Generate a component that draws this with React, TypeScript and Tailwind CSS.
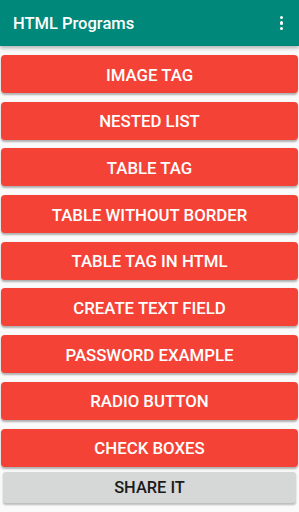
const items = [
  "IMAGE TAG",
  "NESTED LIST",
  "TABLE TAG",
  "TABLE WITHOUT BORDER",
  "TABLE TAG IN HTML",
  "CREATE TEXT FIELD",
  "PASSWORD EXAMPLE",
  "RADIO BUTTON",
  "CHECK BOXES",
];

export default function App() {
  return (
    <div
      className="w-[299px] h-[512px] bg-[#fafafa] flex flex-col overflow-hidden"
      style={{ fontFamily: "Roboto, 'Liberation Sans', sans-serif" }}
    >
      <header className="h-[46px] shrink-0 bg-[#00897b] flex items-center justify-between pl-[13px] pr-[16px] shadow-[0_2px_4px_rgba(0,0,0,0.3)] relative z-10">
        <h1 className="text-white text-[16.5px] font-medium mt-[3px]">HTML Programs</h1>
        <div className="flex flex-col gap-[2px] items-center">
          <span className="w-[3.5px] h-[3.5px] rounded-full bg-white" />
          <span className="w-[3.5px] h-[3.5px] rounded-full bg-white" />
          <span className="w-[3.5px] h-[3.5px] rounded-full bg-white" />
        </div>
      </header>
      <main className="flex flex-col px-[1px] pt-[9px] gap-[8.7px]">
        {items.map((label) => (
          <button
            key={label}
            className="h-[38px] w-full rounded-[4px] bg-[#f44336] text-white text-[16.8px] font-medium leading-none pt-[2px] shadow-[0_1.5px_2px_rgba(0,0,0,0.3)]"
          >
            {label}
          </button>
        ))}
      </main>
      <div className="px-[3px] pt-[5px]">
        <button className="h-[31px] w-full rounded-[3px] bg-[#d6d7d7] text-[#1a1a1a] text-[16.4px] font-medium leading-none pt-[2px] shadow-[0_1.5px_2px_rgba(0,0,0,0.25)]">
          SHARE IT
        </button>
      </div>
    </div>
  );
}
